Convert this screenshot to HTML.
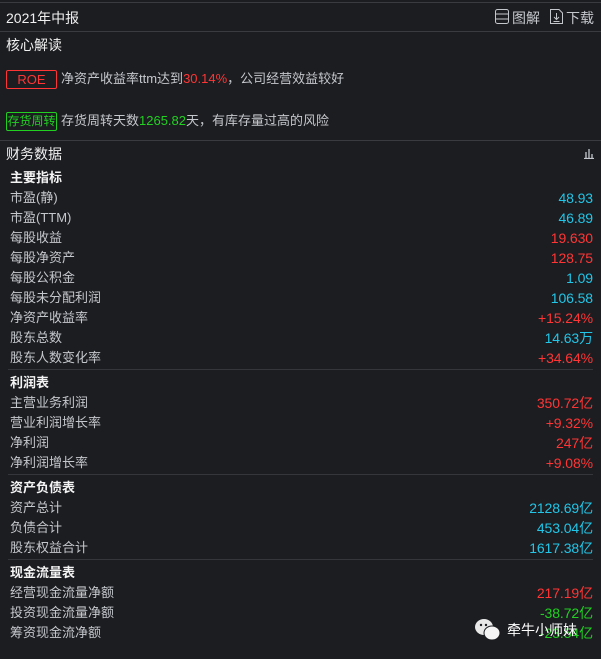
<!DOCTYPE html>
<html><head><meta charset="utf-8"><style>
body{margin:0;width:601px;height:659px;background:#1c1d21;font-family:"Liberation Sans","Noto Sans CJK SC",sans-serif;font-size:13px;color:#c4c7cc;position:relative;overflow:hidden}
.a{position:absolute;white-space:nowrap;line-height:16px}
.hl{position:absolute;left:0;width:601px;height:1px;background:#3a3b40}
.sl{position:absolute;left:8px;width:585px;height:1px;background:#35363b}
.w{color:#f0f0f0}
.b{color:#f4f4f4;font-weight:bold}
.r{color:#ff3535}.c{color:#21c6e8}.g{color:#22d022}
.v{right:8px;text-align:right;font-size:14px;letter-spacing:-0.1px}
</style></head><body>
<div class="hl" style="top:2px"></div>
<div class="a w" style="left:6px;top:10px;font-size:14px">2021年中报</div>
<svg class="a" style="left:495px;top:9px" width="14" height="15" viewBox="0 0 14 15"><rect x="0.5" y="0.5" width="13" height="14" rx="2" fill="none" stroke="#c4c7cc"/><line x1="0.5" y1="5" x2="13.5" y2="5" stroke="#c4c7cc"/><line x1="0.5" y1="10" x2="13.5" y2="10" stroke="#c4c7cc"/></svg>
<div class="a" style="left:512px;top:10px;font-size:14px">图解</div>
<svg class="a" style="left:550px;top:9px" width="13" height="15" viewBox="0 0 13 15"><path d="M0.5 0.5H9L12.5 4V14.5H0.5Z" fill="none" stroke="#c4c7cc"/><path d="M6.5 4V10M4 8L6.5 10.5L9 8M3.5 12.5H9.5" fill="none" stroke="#c4c7cc"/></svg>
<div class="a" style="left:566px;top:10px;font-size:14px">下载</div>
<div class="hl" style="top:31px"></div>
<div class="a w" style="left:6px;top:37px;font-size:14px">核心解读</div>
<div class="a r" style="left:6px;top:70px;width:49px;height:17px;border:1px solid #ff3535;border-radius:2px;text-align:center;line-height:17px">ROE</div>
<div class="a" style="left:61px;top:71px">净资产收益率ttm达到<span class="r">30.14%</span>，公司经营效益较好</div>
<div class="a g" style="left:6px;top:112px;width:49px;height:17px;border:1px solid #22d022;border-radius:2px;text-align:center;line-height:17px;font-size:12px">存货周转</div>
<div class="a" style="left:61px;top:113px">存货周转天数<span class="g">1265.82</span>天，有库存量过高的风险</div>
<div class="hl" style="top:140px"></div>
<div class="a w" style="left:6px;top:146px;font-size:14px">财务数据</div>
<svg class="a" style="left:583px;top:147px" width="12" height="12"><path d="M1 11.5H11M3 11V5M6 11V2M9 11V7" stroke="#c4c7cc" stroke-width="1.3" fill="none"/></svg>

<div class="a b" style="left:10px;top:170px">主要指标</div>
<div class="a" style="left:10px;top:190px">市盈(静)</div><div class="a v c" style="top:190px">48.93</div>
<div class="a" style="left:10px;top:210px">市盈(TTM)</div><div class="a v c" style="top:210px">46.89</div>
<div class="a" style="left:10px;top:230px">每股收益</div><div class="a v r" style="top:230px">19.630</div>
<div class="a" style="left:10px;top:250px">每股净资产</div><div class="a v r" style="top:250px">128.75</div>
<div class="a" style="left:10px;top:270px">每股公积金</div><div class="a v c" style="top:270px">1.09</div>
<div class="a" style="left:10px;top:290px">每股未分配利润</div><div class="a v c" style="top:290px">106.58</div>
<div class="a" style="left:10px;top:310px">净资产收益率</div><div class="a v r" style="top:310px">+15.24%</div>
<div class="a" style="left:10px;top:330px">股东总数</div><div class="a v c" style="top:330px">14.63万</div>
<div class="a" style="left:10px;top:350px">股东人数变化率</div><div class="a v r" style="top:350px">+34.64%</div>
<div class="sl" style="top:369px"></div>
<div class="a b" style="left:10px;top:375px">利润表</div>
<div class="a" style="left:10px;top:395px">主营业务利润</div><div class="a v r" style="top:395px">350.72亿</div>
<div class="a" style="left:10px;top:415px">营业利润增长率</div><div class="a v r" style="top:415px">+9.32%</div>
<div class="a" style="left:10px;top:435px">净利润</div><div class="a v r" style="top:435px">247亿</div>
<div class="a" style="left:10px;top:455px">净利润增长率</div><div class="a v r" style="top:455px">+9.08%</div>
<div class="sl" style="top:474px"></div>
<div class="a b" style="left:10px;top:480px">资产负债表</div>
<div class="a" style="left:10px;top:500px">资产总计</div><div class="a v c" style="top:500px">2128.69亿</div>
<div class="a" style="left:10px;top:520px">负债合计</div><div class="a v c" style="top:520px">453.04亿</div>
<div class="a" style="left:10px;top:540px">股东权益合计</div><div class="a v c" style="top:540px">1617.38亿</div>
<div class="sl" style="top:559px"></div>
<div class="a b" style="left:10px;top:565px">现金流量表</div>
<div class="a" style="left:10px;top:585px">经营现金流量净额</div><div class="a v r" style="top:585px">217.19亿</div>
<div class="a" style="left:10px;top:605px">投资现金流量净额</div><div class="a v g" style="top:605px">-38.72亿</div>
<div class="a" style="left:10px;top:625px">筹资现金流净额</div><div class="a v g" style="top:625px">-23.54亿</div>
<svg class="a" style="left:474px;top:618px" width="28" height="24"><ellipse cx="10" cy="9" rx="9" ry="8" fill="#e8e8e8"/><ellipse cx="18" cy="15" rx="8" ry="7" fill="#f4f4f4" stroke="#1c1d21"/><circle cx="7" cy="7" r="1.2" fill="#1c1d21"/><circle cx="12" cy="7" r="1.2" fill="#1c1d21"/></svg>
<div class="a" style="left:507px;top:622px;color:#fff;font-size:14px">牵牛小师妹</div>
</body></html>
